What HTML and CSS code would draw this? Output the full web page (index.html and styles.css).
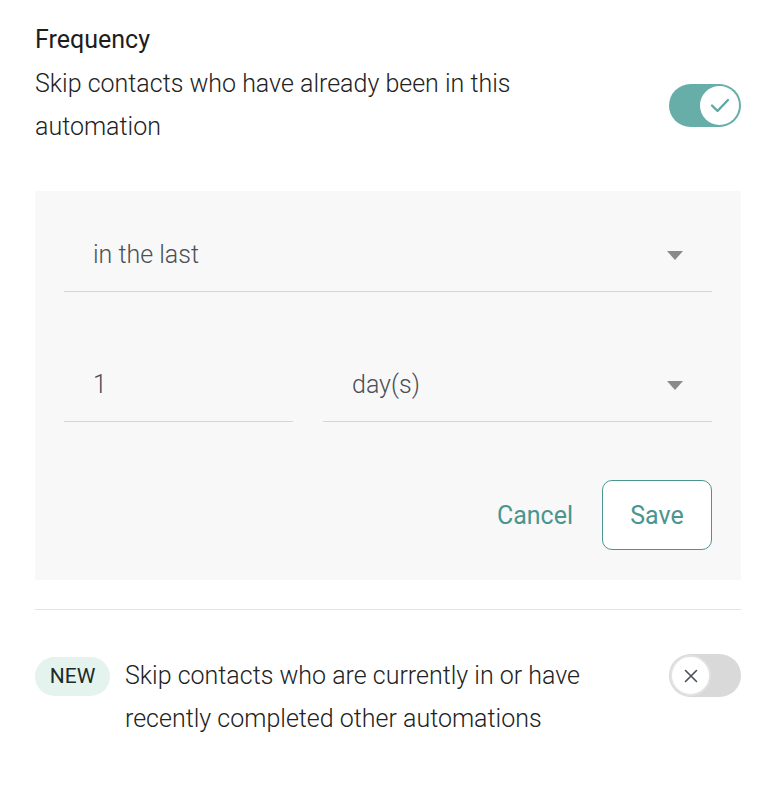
FILE: index.html
```html
<!DOCTYPE html>
<html>
<head>
<meta charset="utf-8">
<link rel="stylesheet" href="styles.css">
</head>
<body>
<div class="panel">
  <h2 class="title">Frequency</h2>
  <div class="setting">
    <p class="setting-text">Skip contacts who have already been in this automation</p>
    <div class="toggle on">
      <span class="knob">
        <svg width="22" height="22" viewBox="0 0 22 22"><path d="M3 11.5l5.5 5.5L19 6" fill="none" stroke="#5fa9a4" stroke-width="2.4" stroke-linecap="round" stroke-linejoin="round"/></svg>
      </span>
    </div>
  </div>

  <div class="box">
    <div class="field select">
      <span class="value">in the last</span>
      <span class="caret"></span>
    </div>
    <div class="row">
      <div class="field num"><span class="value">1</span></div>
      <div class="field select grow">
        <span class="value">day(s)</span>
        <span class="caret"></span>
      </div>
    </div>
    <div class="actions">
      <button class="btn link">Cancel</button>
      <button class="btn outline">Save</button>
    </div>
  </div>

  <hr class="divider">

  <div class="setting top">
    <span class="badge">NEW</span>
    <p class="setting-text second">Skip contacts who are currently in or have recently completed other automations</p>
    <div class="toggle off">
      <span class="knob">
        <svg width="16" height="16" viewBox="0 0 16 16"><path d="M2.5 2.5l11 11M13.5 2.5l-11 11" stroke="#4a4f57" stroke-width="1.6" stroke-linecap="round"/></svg>
      </span>
    </div>
  </div>
</div>
</body>
</html>
```
FILE: styles.css
```css
* { box-sizing: border-box; }
body {
  margin: 0;
  background: #fff;
  font-family: Roboto, "Liberation Sans", sans-serif;
  color: #222;
}
.panel {
  padding: 25px 39px 40px 35px;
}
.title {
  margin: 0;
  font-size: 25px;
  line-height: 30px;
  font-weight: 400;
  color: #1d1d1d;
}
.setting {
  display: flex;
  align-items: center;
  margin-top: 7px;
}
.setting.top {
  align-items: flex-start;
  margin-top: 44px;
}
.setting-text {
  margin: 0;
  flex: 1;
  font-size: 25px;
  line-height: 43px;
  font-weight: 300;
  color: #222;
  padding-right: 140px;
}
.setting-text.second {
  padding-right: 70px;
}
.toggle {
  width: 72px;
  height: 43px;
  border-radius: 22px;
  display: flex;
  align-items: center;
  flex-shrink: 0;
}
.toggle.on {
  background: #67aea9;
  justify-content: flex-end;
  padding: 2px;
}
.toggle.off {
  background: #d9d9d9;
  justify-content: flex-start;
  padding: 1px;
}
.knob {
  width: 39px;
  height: 39px;
  border-radius: 50%;
  background: #fff;
  display: flex;
  align-items: center;
  justify-content: center;
}
.toggle.off .knob {
  width: 41px;
  height: 41px;
  border: 2px solid #e2e2e2;
}
.box {
  margin-top: 43px;
  background: #f8f8f8;
  padding: 35px 29px 30px 29px;
}
.field {
  display: flex;
  align-items: center;
  height: 66px;
  padding: 14px 29px 21px 29px;
  border-bottom: 1px solid #d6d6d6;
  font-size: 25px;
  font-weight: 300;
  color: #4a4f57;
}
.field .value { flex: 1; line-height: 30px; }
.caret {
  width: 0;
  height: 0;
  border-left: 8px solid transparent;
  border-right: 8px solid transparent;
  border-top: 9px solid #8a8a8a;
}
.row {
  display: flex;
  gap: 30px;
  margin-top: 64px;
}
.num { width: 229px; }
.grow { flex: 1; }
.actions {
  display: flex;
  justify-content: flex-end;
  align-items: center;
  margin-top: 58px;
  gap: 29px;
}
.btn {
  font-family: Roboto, "Liberation Sans", sans-serif;
  font-size: 25px;
  font-weight: 400;
  color: #4b958f;
  background: none;
  border: none;
  cursor: pointer;
}
.btn.link { padding: 0; }
.btn.outline {
  width: 110px;
  height: 70px;
  border: 1px solid #4b958f;
  border-radius: 10px;
  background: #fff;
}
.divider {
  margin: 29px 0 0 0;
  border: none;
  border-top: 1px solid #e3e3e3;
}
.badge {
  flex-shrink: 0;
  margin-top: 3px;
  margin-right: 15px;
  width: 75px;
  height: 39px;
  border-radius: 20px;
  background: #e5f3ef;
  font-size: 21px;
  line-height: 39px;
  text-align: center;
  color: #1d2b28;
}
```
